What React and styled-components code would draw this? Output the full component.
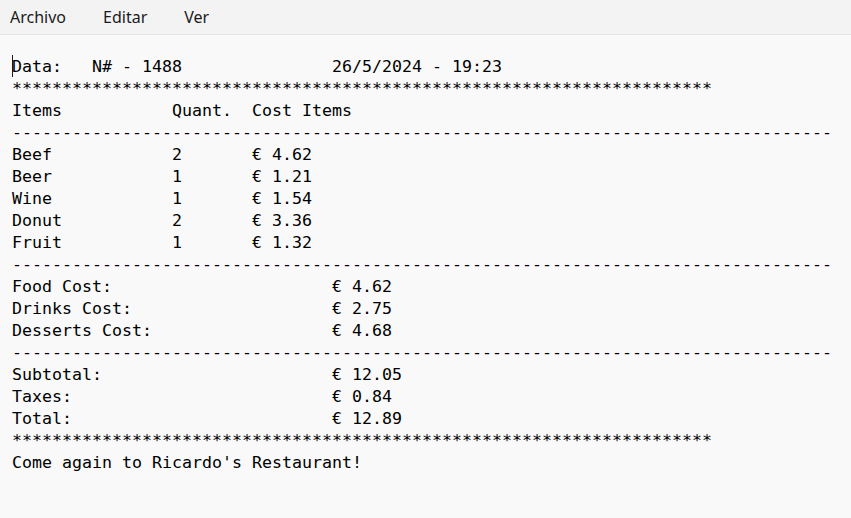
import React from 'react'
import styled, { createGlobalStyle } from 'styled-components'

const GlobalStyle = createGlobalStyle`
  html, body, #root {
    margin: 0;
    height: 100%;
  }
  body {
    background: #f9f9f9;
    overflow: hidden;
  }
`

const Window = styled.div`
  display: flex;
  flex-direction: column;
  height: 100%;
  background: #f9f9f9;
`

const MenuBar = styled.div`
  display: flex;
  align-items: center;
  gap: 37px;
  height: 34px;
  padding-left: 10px;
  background: #f3f3f3;
  border-bottom: 1px solid #e5e5e5;
  font-family: 'Segoe UI', 'Noto Sans', sans-serif;
  font-size: 16px;
  color: #1b1b1b;
`

const MenuItem = styled.span`
  line-height: 20px;
  cursor: default;
`

const Editor = styled.div`
  flex: 1;
  padding: 21px 12px 20px;
  font-family: 'DejaVu Sans Mono', 'Liberation Mono', monospace;
  font-size: 16.61px;
  line-height: 22px;
  color: #000;
`

const Row = styled.div`
  display: grid;
  grid-template-columns: ${props => props.cols || 'auto'};
  height: 22px;
  white-space: pre;
`

const Cell = styled.span`
  white-space: pre;
`

const Rule = styled.div`
  height: 22px;
  white-space: pre;
  overflow: hidden;
`

const Caret = styled.span`
  display: inline-block;
  width: 1px;
  height: 22px;
  margin: -1px -1px 0 0;
  vertical-align: top;
  background: #1a1a1a;
`

const items = [
  { name: 'Beef', qty: 2, cost: '4.62' },
  { name: 'Beer', qty: 1, cost: '1.21' },
  { name: 'Wine', qty: 1, cost: '1.54' },
  { name: 'Donut', qty: 2, cost: '3.36' },
  { name: 'Fruit', qty: 1, cost: '1.32' },
]

const costs = [
  { label: 'Food Cost:', value: '4.62' },
  { label: 'Drinks Cost:', value: '2.75' },
  { label: 'Desserts Cost:', value: '4.68' },
]

const totals = [
  { label: 'Subtotal:', value: '12.05' },
  { label: 'Taxes:', value: '0.84' },
  { label: 'Total:', value: '12.89' },
]

const itemCols = '16ch 8ch auto'
const sumCols = '32ch auto'

const Stars = () => <Rule>{'*'.repeat(70)}</Rule>
const Dashes = () => <Rule>{'-'.repeat(82)}</Rule>

const SummaryRow = ({ label, value }) => (
  <Row cols={sumCols}>
    <Cell>{label}</Cell>
    <Cell>€ {value}</Cell>
  </Row>
)

const App = () => (
  <>
    <GlobalStyle />
    <Window>
      <MenuBar>
        <MenuItem>Archivo</MenuItem>
        <MenuItem>Editar</MenuItem>
        <MenuItem>Ver</MenuItem>
      </MenuBar>
      <Editor>
        <Row cols={sumCols}>
          <Cell>
            <Caret />
            Data:   N# - 1488
          </Cell>
          <Cell>26/5/2024 - 19:23</Cell>
        </Row>
        <Stars />
        <Row cols={itemCols}>
          <Cell>Items</Cell>
          <Cell>Quant.</Cell>
          <Cell>Cost Items</Cell>
        </Row>
        <Dashes />
        {items.map(item => (
          <Row key={item.name} cols={itemCols}>
            <Cell>{item.name}</Cell>
            <Cell>{item.qty}</Cell>
            <Cell>€ {item.cost}</Cell>
          </Row>
        ))}
        <Dashes />
        {costs.map(c => (
          <SummaryRow key={c.label} {...c} />
        ))}
        <Dashes />
        {totals.map(t => (
          <SummaryRow key={t.label} {...t} />
        ))}
        <Stars />
        <Row>
          <Cell>Come again to Ricardo's Restaurant!</Cell>
        </Row>
      </Editor>
    </Window>
  </>
)

export default App
